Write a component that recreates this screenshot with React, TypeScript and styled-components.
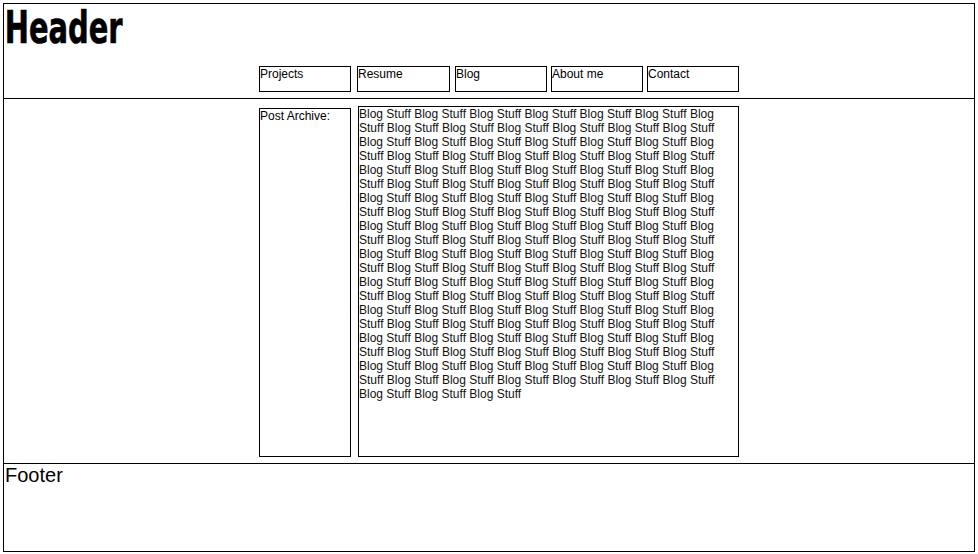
import React from "react";
import styled, { createGlobalStyle } from "styled-components";

const Global = createGlobalStyle`
  html, body { margin: 0; padding: 0; background: #fff; }
  body { font-family: "Liberation Sans", Arial, sans-serif; font-size: 12px; color: #000; }
`;

const Page = styled.div`
  box-sizing: border-box;
  margin: 3px;
  width: 972px;
  height: 549px;
  border: 1px solid #000;
  display: flex;
  flex-direction: column;
`;

const Header = styled.header`
  box-sizing: border-box;
  height: 95px;
  border-bottom: 1px solid #000;
  display: flex;
  flex-direction: column;
  justify-content: space-between;
  padding-bottom: 6px;
`;

const Title = styled.h1`
  margin: 0;
  padding: 0 0 0 1px;
  font-family: Impact, "Liberation Sans Narrow", "DejaVu Sans Condensed", "DejaVu Sans", sans-serif;
  font-weight: bold;
  font-size: 44px;
  line-height: 48px;
  letter-spacing: 0;
  -webkit-text-stroke: 0.6px #000;
  transform: scaleX(0.73);
  transform-origin: left top;
`;

const Nav = styled.nav`
  display: flex;
  padding-left: 255px;
`;

const NavItem = styled.a<{ $w: number; $gap: number }>`
  box-sizing: border-box;
  display: block;
  width: ${(p) => p.$w}px;
  height: 26px;
  margin-left: ${(p) => p.$gap}px;
  border: 1px solid #000;
  color: #000;
  text-decoration: none;
  font-size: 12px;
  line-height: 14px;
`;

const Main = styled.main`
  box-sizing: border-box;
  height: 365px;
  border-bottom: 1px solid #000;
  display: flex;
  align-items: flex-end;
  padding: 0 0 6px 255px;
  gap: 7px;
`;

const Sidebar = styled.aside`
  box-sizing: border-box;
  width: 92px;
  height: 349px;
  border: 1px solid #000;
  font-size: 12px;
  line-height: 14px;
`;

const Content = styled.section`
  box-sizing: border-box;
  width: 381px;
  height: 351px;
  border: 1px solid #000;
  font-size: 12px;
  line-height: 14px;
  color: #111;
`;

const Footer = styled.footer`
  flex: 1;
  font-size: 20px;
  line-height: 22px;
  padding-left: 1px;
`;

const navItems = [
  { label: "Projects", w: 92, gap: 0 },
  { label: "Resume", w: 93, gap: 6 },
  { label: "Blog", w: 92, gap: 5 },
  { label: "About me", w: 92, gap: 4 },
  { label: "Contact", w: 92, gap: 4 },
];

const blogText = Array.from({ length: 133 }, () => "Blog Stuff").join(" ");

export default function App() {
  return (
    <>
      <Global />
      <Page>
        <Header>
          <Title>Header</Title>
          <Nav>
            {navItems.map((n) => (
              <NavItem key={n.label} $w={n.w} $gap={n.gap}>
                {n.label}
              </NavItem>
            ))}
          </Nav>
        </Header>
        <Main>
          <Sidebar>Post Archive:</Sidebar>
          <Content>{blogText}</Content>
        </Main>
        <Footer>Footer</Footer>
      </Page>
    </>
  );
}
